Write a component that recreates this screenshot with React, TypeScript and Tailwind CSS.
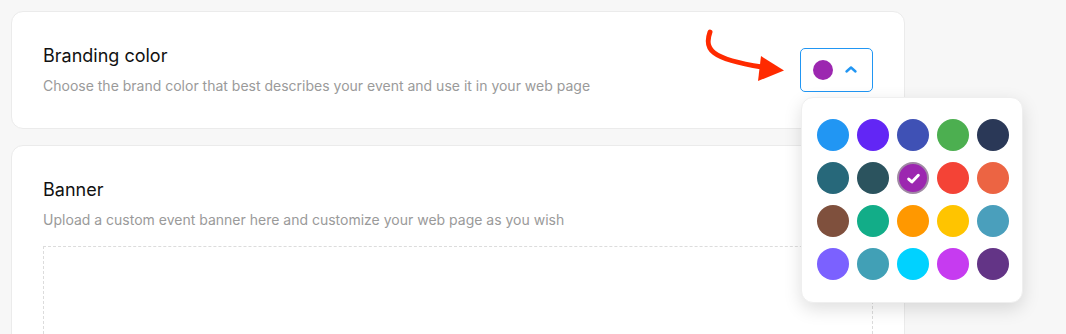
import React from "react";

const colors: string[] = [
  "#2196f3", "#6226f5", "#3f51b5", "#4caf50", "#2a3857",
  "#27687a", "#2b535e", "#9c27b0", "#f44336", "#ec6443",
  "#7f503d", "#12ad88", "#ff9800", "#ffc400", "#4a9fbc",
  "#7b61ff", "#41a0b6", "#00d2ff", "#c63bf0", "#633486",
];

export default function App() {
  return (
    <div
      className="relative h-[334px] w-full overflow-hidden bg-[#f7f7f7] pl-[11px] pt-[11px]"
      style={{ fontFamily: "Inter, 'Noto Sans', sans-serif" }}
    >
      <div className="flex w-[894px] flex-col gap-[16px]">
        {/* Card 1 */}
        <div className="relative flex h-[118px] items-start justify-between rounded-xl border border-[#ebebeb] bg-white pl-[31px] pr-8 pt-8">
          <div className="flex flex-col gap-2">
            <div className="text-[18px] leading-6 text-[#111]">Branding color</div>
            <div className="text-[14px] leading-5 text-[#9a9a9a]">
              Choose the brand color that best describes your event and use it in your web page
            </div>
          </div>
          <div className="relative mr-[-1px] mt-[4px]">
            <button className="flex h-[44px] w-[73px] items-center gap-[10px] rounded-[5px] border border-[#2196f3] bg-white pl-[12px]">
              <span className="h-5 w-5 rounded-full bg-[#9c27b0]" />
              <svg width="14" height="10" viewBox="0 0 14 10" className="ml-[1px]">
                <path d="M2.5 6.5 L7 2.5 L11.5 6.5" fill="none" stroke="#2196f3" strokeWidth="2.4" strokeLinecap="round" strokeLinejoin="round" />
              </svg>
            </button>
          </div>
        </div>

        {/* Card 2 */}
        <div className="flex h-[260px] flex-col rounded-xl border border-[#ebebeb] bg-white pl-[31px] pr-8 pt-8">
          <div className="text-[18px] leading-6 text-[#111]">Banner</div>
          <div className="mt-2 text-[14px] leading-5 text-[#9a9a9a]">
            Upload a custom event banner here and customize your web page as you wish
          </div>
          <div className="mt-4 h-[200px] w-[830px] border border-dashed border-[#dcdcdc]" />
        </div>
      </div>

      {/* Arrow */}
      <svg className="absolute left-[700px] top-[25px]" width="90" height="60" viewBox="0 0 90 60">
        <path d="M10 7 C 4 24, 10 34, 62 42" fill="none" stroke="#ff2a00" strokeWidth="5" strokeLinecap="round" />
        <polygon points="61,31 84,45.5 58,56" fill="#ff2a00" />
      </svg>

      {/* Popup */}
      <div className="absolute left-[801px] top-[97px] w-[222px] rounded-xl border border-[#efefef] bg-white pb-[22px] pl-[15px] pt-[21px] shadow-[0_6px_18px_rgba(0,0,0,0.13)]">
        <div className="grid w-[192px] grid-cols-5 gap-x-2 gap-y-[11px]">
          {colors.map((c, i) =>
            i === 7 ? (
              <div
                key={i}
                className="flex h-8 w-8 items-center justify-center rounded-full border-2 border-[#a08aa4]"
                style={{ backgroundColor: c }}
              >
                <svg width="15" height="13" viewBox="0 0 14 12">
                  <path d="M2.5 6.5 L5.5 9.2 L11.5 3" fill="none" stroke="#fff" strokeWidth="2.8" strokeLinecap="round" strokeLinejoin="round" />
                </svg>
              </div>
            ) : (
              <div key={i} className="h-8 w-8 rounded-full" style={{ backgroundColor: c }} />
            )
          )}
        </div>
      </div>
    </div>
  );
}
